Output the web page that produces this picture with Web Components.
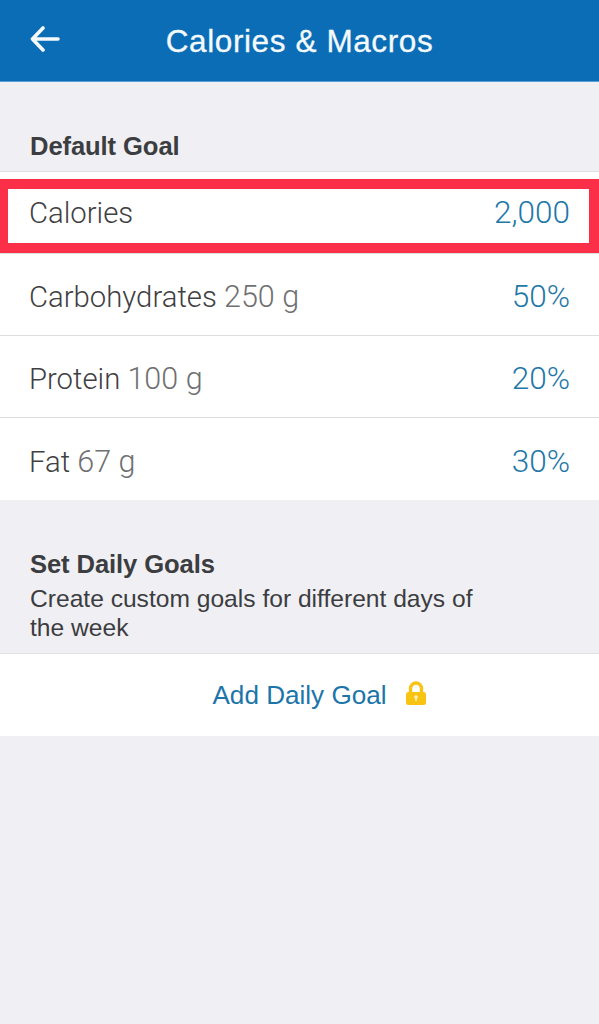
<!DOCTYPE html>
<html>
<head>
<meta charset="utf-8">
<title>Calories &amp; Macros</title>
<style>
  html, body { margin: 0; padding: 0; background: #efeff4; }
  body { font-family: "Liberation Sans", Arial, sans-serif; }
</style>
</head>
<body>
<template id="app-bar-tpl">
  <style>
    :host { display: flex; align-items: center; height: 81px; background: #0a6db6; color: #f4f9fc; position: relative; border-bottom: 1px solid #5b9fd3; }
    .back { flex: none; width: 30px; height: 26px; margin: -3px 0 0 30px; }
    .title { flex: 1; text-align: center; font-size: 31.5px; letter-spacing: .6px; padding-right: 60px; margin-top: 2px; -webkit-text-stroke: .3px #f4f9fc; }
  </style>
  <svg class="back" viewBox="0 0 30 26" fill="none" stroke="#f6fafd" stroke-width="3.6" stroke-linecap="round" stroke-linejoin="round">
    <path d="M13 2 2.5 13 13 24M3 13h25"/>
  </svg>
  <div class="title"><slot></slot></div>
</template>

<template id="section-head-tpl">
  <style>
    :host { display: block; padding: var(--head-pad, 49px 30px 5px); color: #3c3d40; border-bottom: 1px solid #dfdfe3; }
    .t { font-size: 25.6px; font-weight: bold; line-height: 30px; letter-spacing: -.1px; }
    .d { font-size: 24.6px; line-height: 29px; max-width: 470px; margin-top: 5px; }
    .d:empty { display: none; }
  </style>
  <div class="t"><slot name="title"></slot></div>
  <div class="d"><slot name="desc"></slot></div>
</template>

<template id="goal-row-tpl">
  <style>
    :host { display: flex; align-items: center; justify-content: space-between; box-sizing: border-box; height: 82px; padding: 3px 29px 0; background: #fff; border-bottom: 1px solid #dedee0; font-family: Roboto, "Liberation Sans", sans-serif; font-weight: 300; font-size: 29.3px; position: relative; }
    :host([last]) { border-bottom: 0; padding-top: 4px; }
    :host([highlight]) { padding-top: 0; }
    .name { color: #3f4042; }
    .sub { color: #6f7072; font-size: 30.5px; }
    .val { color: #1f78a8; font-size: 31.5px; }
    :host([highlight])::after { content: ""; position: absolute; left: 0; right: 0; top: 7px; height: 54px; border: 10px solid #fb3048; border-left-width: 8px; }
  </style>
  <div><span class="name"><slot name="name"></slot></span> <span class="sub"><slot name="sub"></slot></span></div>
  <div class="val"><slot name="val"></slot></div>
</template>

<template id="action-row-tpl">
  <style>
    :host { display: flex; align-items: center; justify-content: center; gap: 18px; box-sizing: border-box; height: 82px; padding: 1px 0 0 40px; background: #fff; color: #1c75a9; font-size: 26.1px; }
    svg { width: 22px; height: 25px; margin-top: -5px; }
  </style>
  <slot></slot>
  <svg viewBox="0 0 22 25">
    <path d="M5.5 12V7.5a5.5 5.5 0 0 1 11 0V12" fill="none" stroke="#f9c312" stroke-width="3.4"/>
    <rect x="1" y="11" width="20" height="13" rx="2.5" fill="#f9c312"/>
    <circle cx="11" cy="16" r="1.8" fill="#fff3c4"/>
    <rect x="10.3" y="16" width="1.4" height="4" fill="#fff3c4"/>
  </svg>
</template>

<app-bar>Calories &amp; Macros</app-bar>
<section-head>
  <span slot="title">Default Goal</span>
</section-head>
<goal-row highlight><span slot="name">Calories</span><span slot="val">2,000</span></goal-row>
<goal-row><span slot="name">Carbohydrates</span><span slot="sub">250 g</span><span slot="val">50%</span></goal-row>
<goal-row><span slot="name">Protein</span><span slot="sub">100 g</span><span slot="val">20%</span></goal-row>
<goal-row last><span slot="name">Fat</span><span slot="sub">67 g</span><span slot="val">30%</span></goal-row>
<section-head id="daily">
  <span slot="title">Set Daily Goals</span>
  <span slot="desc">Create custom goals for different days of the week</span>
</section-head>
<action-row>Add Daily Goal</action-row>

<script>
  // Every element here just stamps its template into an open shadow root
  function define(name, tplId) {
    customElements.define(name, class extends HTMLElement {
      constructor() {
        super();
        this.attachShadow({ mode: 'open' });
        this.shadowRoot.appendChild(document.getElementById(tplId).content.cloneNode(true));
      }
    });
  }
  define('app-bar', 'app-bar-tpl');
  define('section-head', 'section-head-tpl');
  define('goal-row', 'goal-row-tpl');
  define('action-row', 'action-row-tpl');
  document.getElementById('daily').style.setProperty('--head-pad', '49px 30px 11px');
</script>
</body>
</html>
